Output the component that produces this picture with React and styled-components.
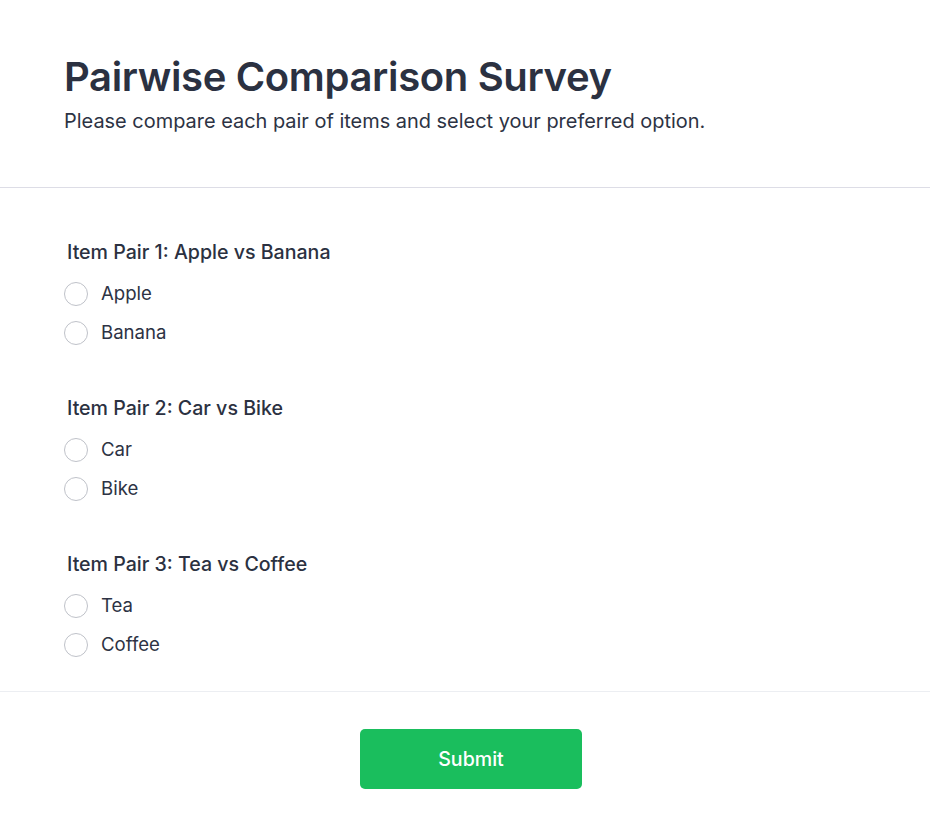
import React from "react";
import styled, { createGlobalStyle } from "styled-components";

const GlobalStyle = createGlobalStyle`
  body {
    margin: 0;
    background: #ffffff;
    font-family: Inter, "Noto Sans", sans-serif;
    color: #2d3344;
  }
`;

const Page = styled.div`
  width: 930px;
  min-height: 838px;
  background: #fff;
`;

const Header = styled.header`
  padding: 53px 64px 0 64px;
  height: 188px;
  box-sizing: border-box;
  border-bottom: 1px solid #dddde6;
`;

const Title = styled.h1`
  margin: 0;
  font-size: 40px;
  line-height: 48px;
  font-weight: 600;
  color: #2b3141;
  letter-spacing: -0.35px;
`;

const Subtitle = styled.p`
  margin: 6px 0 0;
  font-size: 19.95px;
  line-height: 28px;
  color: #2d3344;
`;

const Form = styled.form`
  padding: 50px 64px 34px;
  border-bottom: 1px solid #eceef2;
  display: flex;
  flex-direction: column;
  gap: 49px;
`;

const Pair = styled.fieldset`
  margin: 0;
  padding: 0;
  border: none;
  display: flex;
  flex-direction: column;
  gap: 14px;
`;

const PairTitle = styled.legend`
  padding: 0 0 0 3px;
  margin-bottom: 15px;
  font-size: 19.6px;
  line-height: 28px;
  font-weight: 500;
  color: #2b3141;
`;

const Option = styled.label`
  display: flex;
  align-items: center;
  gap: 13px;
  font-size: 18.6px;
  line-height: 25px;
  color: #2d3344;
  cursor: pointer;
`;

const Radio = styled.input.attrs({ type: "radio" })`
  appearance: none;
  margin: 0;
  width: 24px;
  height: 24px;
  border: 1.5px solid #bfc2c9;
  border-radius: 50%;
  background: #fff;
  cursor: pointer;
`;

const Footer = styled.div`
  display: flex;
  justify-content: center;
  padding: 37px 0 48px 12px;
`;

const SubmitButton = styled.button`
  width: 222px;
  height: 60px;
  border: none;
  border-radius: 5px;
  background: #1abe5d;
  color: #fff;
  font-family: Inter, "Noto Sans", sans-serif;
  font-size: 19.6px;
  font-weight: 500;
  cursor: pointer;
`;

const pairs = [
  { name: "pair1", title: "Item Pair 1: Apple vs Banana", options: ["Apple", "Banana"] },
  { name: "pair2", title: "Item Pair 2: Car vs Bike", options: ["Car", "Bike"] },
  { name: "pair3", title: "Item Pair 3: Tea vs Coffee", options: ["Tea", "Coffee"] },
];

export default function App() {
  return (
    <Page>
      <GlobalStyle />
      <Header>
        <Title>Pairwise Comparison Survey</Title>
        <Subtitle>Please compare each pair of items and select your preferred option.</Subtitle>
      </Header>
      <Form onSubmit={(e) => e.preventDefault()}>
        {pairs.map((p) => (
          <Pair key={p.name}>
            <PairTitle>{p.title}</PairTitle>
            {p.options.map((o) => (
              <Option key={o}>
                <Radio name={p.name} value={o} />
                {o}
              </Option>
            ))}
          </Pair>
        ))}
      </Form>
      <Footer>
        <SubmitButton type="button">Submit</SubmitButton>
      </Footer>
    </Page>
  );
}
